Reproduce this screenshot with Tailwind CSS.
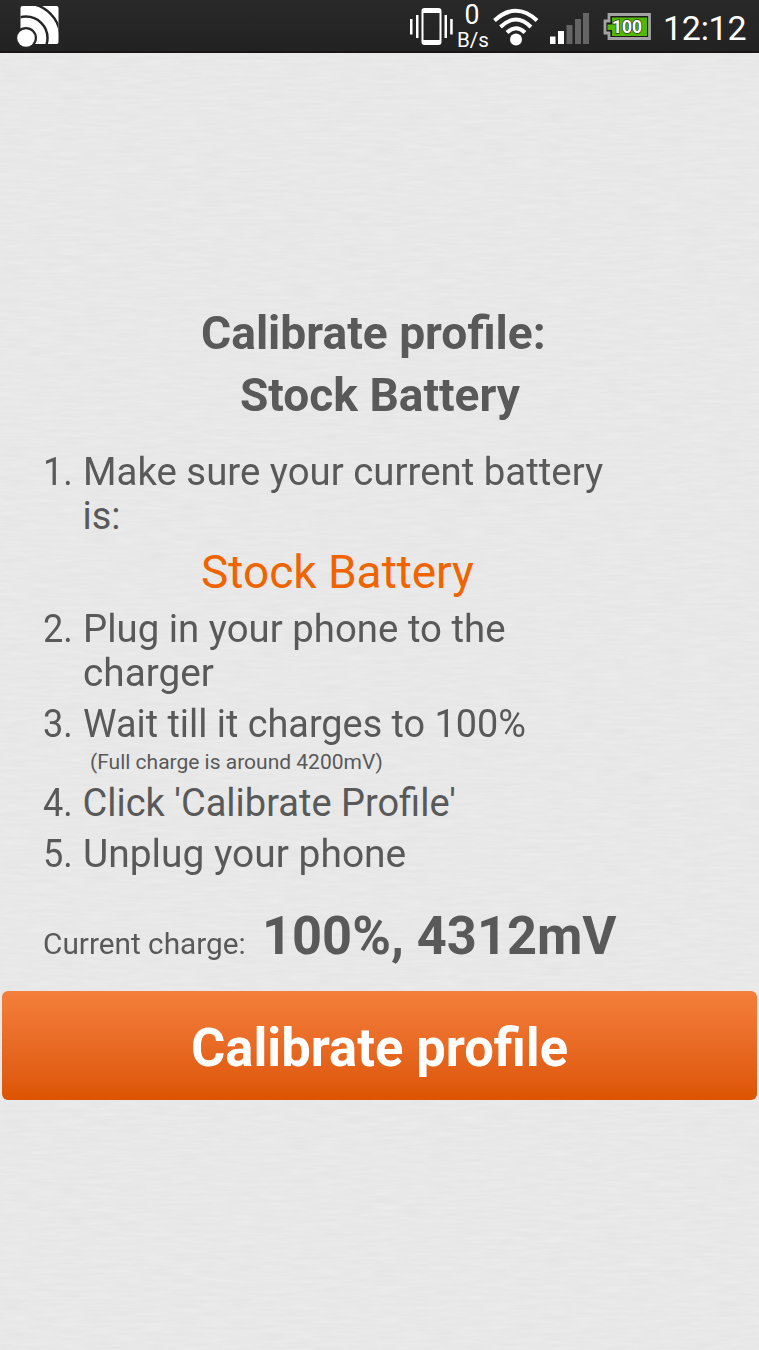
<!DOCTYPE html>
<html lang="en">
<head>
<meta charset="utf-8">
<title>Calibrate profile</title>
<script src="https://cdn.jsdelivr.net/npm/@tailwindcss/browser@4"></script>
</head>
<body class="relative h-[1350px] w-[759px] overflow-hidden bg-[#e8e8e8] font-['Roboto',sans-serif] text-[#595959] whitespace-nowrap">
<svg class="absolute inset-0 -z-10" width="759" height="1350">
  <filter id="paper" x="0" y="0" width="100%" height="100%" color-interpolation-filters="sRGB"><feTurbulence type="fractalNoise" baseFrequency="0.035 0.3" numOctaves="3" seed="4"/><feColorMatrix values="0.035 0 0 0 0.892  0.035 0 0 0 0.892  0.035 0 0 0 0.892  0 0 0 0 1"/></filter>
  <rect width="759" height="1350" filter="url(#paper)"/>
</svg>
<header class="h-[53px] border-b-2 border-[#191515] bg-linear-to-b from-[#292929] to-[#222222] text-white">
<svg class="block" width="759" height="51" viewBox="0 0 759 51" font-family="Roboto, sans-serif" fill="#fff">
  <defs><clipPath id="cast"><rect x="20.500" y="6" width="38" height="38" rx="2"/></clipPath></defs>
  <g clip-path="url(#cast)">
    <rect x="20" y="5" width="39" height="40"/>
    <g fill="none" stroke="#262626" stroke-width="2.500"><circle cx="26" cy="38" r="21.500"/><circle cx="26" cy="38" r="34.500"/></g>
  </g>
  <circle cx="26" cy="38" r="11" fill="#262626"/><circle cx="26" cy="38" r="8.800"/>
  <g><rect x="410" y="19" width="2.500" height="15.500"/><rect x="416" y="15" width="2.500" height="23"/><rect x="444.500" y="15" width="2.500" height="23"/><rect x="450.200" y="19" width="2.500" height="15.500"/>
  <path fill-rule="evenodd" d="M424.500 8H438.500Q441.500 8 441.500 11V42Q441.500 45 438.500 45H424.500Q421.500 45 421.500 42V11Q421.500 8 424.500 8ZM423.500 13V40H439.500V13Z"/></g>
  <text x="472" y="24" font-size="27" text-anchor="middle" textLength="15" lengthAdjust="spacingAndGlyphs">0</text>
  <text x="457" y="47" font-size="21" textLength="32" lengthAdjust="spacingAndGlyphs">B/s</text>
  <g fill="none" stroke="#fff" stroke-width="4"><path d="M494.500 20.500Q516 1 537 20.500"/><path d="M500.500 27Q516 12 531 27"/><path d="M507 32.500Q516 24 525 32.500"/></g><circle cx="516" cy="39.500" r="6"/>
  <rect x="550" y="36.500" width="5.500" height="7.500"/><rect x="558" y="31" width="6" height="13"/><g fill="#656565"><rect x="566.500" y="25" width="6" height="19"/><rect x="575" y="19" width="6" height="25"/><rect x="583" y="13" width="6" height="31"/></g>
  <path d="M609 14.500H649.500V38.500H609V33H605V21H609Z" fill="#1a1a1a" stroke="#a3a3a3" stroke-width="2.800"/>
  <path d="M612 17.500H647V36H612V30H607.500V24.500H612Z" fill="#52b800"/>
  <text x="612" y="32.500" font-size="18" font-weight="700" textLength="30" lengthAdjust="spacingAndGlyphs" stroke="#333" stroke-width="1.500" paint-order="stroke">100</text>
  <text x="663" y="39.500" font-size="34" textLength="83.500" lengthAdjust="spacing">12:12</text>
</svg>
</header>
<main class="pt-[249px]">
<h1 class="pl-[201px] text-[47px] leading-[62px] font-bold"><span class="block origin-left scale-x-[0.982]">Calibrate profile:</span><span class="ml-[39px] block origin-left scale-x-[0.98]">Stock Battery</span></h1>
<ol class="pt-6 pl-[43px] text-[38px] leading-[44px]">
  <li class="flex"><span class="w-[39.500px] origin-left scale-x-[0.95]">1.</span><div><p class="origin-left scale-x-[1.01]">Make sure your current battery</p><p>is:</p></div></li>
  <li class="mt-[7px] mb-2 pl-[158px] text-[46px] leading-[54px] text-[#f06400]">Stock Battery</li>
  <li class="flex"><span class="w-[39.500px] origin-left scale-x-[0.95]">2.</span><div><p class="origin-left scale-x-[1.01]">Plug in your phone to the</p><p class="origin-left scale-x-[1.02]">charger</p></div></li>
  <li class="mt-[7px] flex"><span class="w-[39.500px] origin-left scale-x-[0.95]">3.</span><p class="origin-left scale-x-[0.995]">Wait till it charges to 100%</p></li>
  <li class="mt-1 mb-[7px] pl-[47px] text-[21px] leading-6">(Full charge is around 4200mV)</li>
  <li class="flex"><span class="w-[39.500px] origin-left scale-x-[0.95]">4.</span><p>Click 'Calibrate Profile'</p></li>
  <li class="mt-[7px] flex"><span class="w-[39.500px] origin-left scale-x-[0.95]">5.</span><p class="origin-left scale-x-[1.024]">Unplug your phone</p></li>
</ol>
<div class="mt-[30px] flex h-[60px] items-baseline pl-[43px]"><span class="w-[219px] origin-left scale-x-[1.027] text-[29px]">Current charge:</span><strong class="origin-left scale-x-[0.97] text-[54px] leading-[60px] font-bold">100%, 4312mV</strong></div>
<button class="mx-0.5 mt-[25px] block h-[109px] w-[755px] rounded-md bg-linear-to-b from-[#f47f3a] to-[#dc5400] pt-1.5 pl-[189px] text-left text-[53px] font-bold text-white"><span class="block origin-left scale-x-[0.99]">Calibrate profile</span></button>
</main>
</body>
</html>
